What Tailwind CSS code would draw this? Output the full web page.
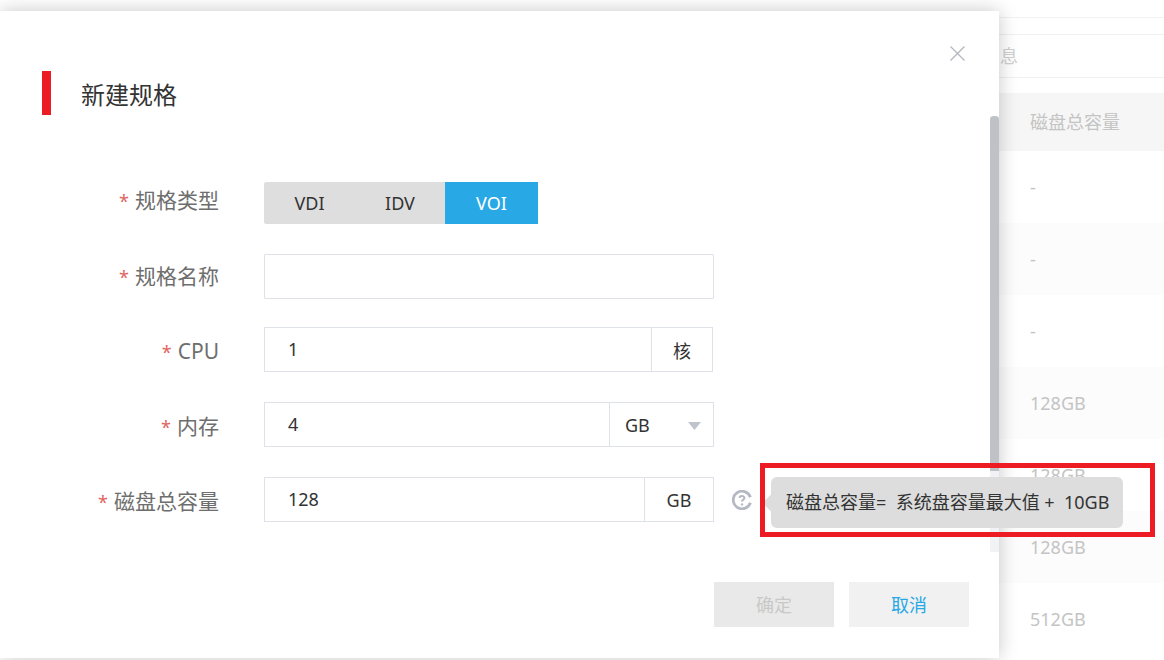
<!DOCTYPE html>
<html lang="zh-CN">
<head>
    <meta charset="UTF-8">
    <title>新建规格</title>
    <script src="https://cdn.jsdelivr.net/npm/@tailwindcss/browser@4"></script>
</head>
<body class="relative w-[1164px] h-[660px] overflow-hidden bg-white font-['Noto_Sans','Noto_Sans_CJK_SC',sans-serif]">
    <!-- page behind the dialog -->
    <div class="flex flex-col w-full h-full pt-[17px] text-[18px] text-[#c4c4c4]">
        <div class="h-[17px] border-t border-[#f2f2f2] shrink-0"></div>
        <div class="h-[44px] border-y border-[#f0f0f0] shrink-0 pl-[1000px] flex items-center text-[#d0d0d0]">息</div>
        <div class="h-[58px] mt-[15px] bg-[#f6f6f6] shrink-0 pl-[1030px] flex items-center">磁盘总容量</div>
        <div class="h-[72px] shrink-0 pl-[1030px] flex items-center">-</div>
        <div class="h-[72px] shrink-0 pl-[1030px] flex items-center bg-[#fcfcfc]">-</div>
        <div class="h-[72px] shrink-0 pl-[1030px] flex items-center">-</div>
        <div class="h-[72px] shrink-0 pl-[1030px] flex items-center bg-[#fcfcfc]">128GB</div>
        <div class="h-[72px] shrink-0 pl-[1030px] flex items-center">128GB</div>
        <div class="h-[72px] shrink-0 pl-[1030px] flex items-center bg-[#fcfcfc]">128GB</div>
        <div class="h-[72px] shrink-0 pl-[1030px] flex items-center">512GB</div>
    </div>

    <!-- dialog -->
    <div class="absolute left-0 top-[11px] w-[999px] h-[647px] bg-white shadow-[0_0_18px_rgba(0,0,0,0.22)]">
        <div class="absolute right-0 top-[105px] w-[9px] h-[436px] bg-[#f0f2f6]">
            <div class="w-full h-[355px] bg-[#bec2c6] rounded-t-[4px]"></div>
        </div>

        <svg class="absolute left-[950px] top-[35px] w-[15px] h-[15px] text-[#b4b8c0]" viewBox="0 0 15 15" fill="none" stroke="currentColor" stroke-width="1.4">
            <path d="M0.5 0.5 14.5 14.5M14.5 0.5 0.5 14.5"></path>
        </svg>

        <div class="flex items-center h-[44px] mt-[60px] pl-[42px]">
            <div class="w-[9px] h-[44px] bg-[#ed1c24]"></div>
            <h1 class="ml-[30px] pt-[4px] text-[24px] leading-none text-[#333]">新建规格</h1>
        </div>

        <div class="flex flex-col gap-[30px] mt-[67px]">
            <div class="flex items-center h-[42px]">
                <label class="w-[219px] pb-[6px] text-right text-[21px] leading-none text-[#6e6e6e]"><span class="text-[#e0655f] text-[18px] mr-[6px]">*</span>规格类型</label>
                <div class="flex ml-[45px] h-[42px] w-[274px] text-[18px] text-[#333] rounded-l-[2px] overflow-hidden">
                    <div class="w-[91px] bg-[#dedede] flex items-center justify-center">VDI</div>
                    <div class="w-[90px] bg-[#dedede] flex items-center justify-center">IDV</div>
                    <div class="w-[93px] bg-[#29a8e6] text-white flex items-center justify-center">VOI</div>
                </div>
            </div>
            <div class="flex items-center h-[45px]">
                <label class="w-[219px] text-right text-[21px] leading-none text-[#6e6e6e]"><span class="text-[#e0655f] text-[18px] mr-[6px]">*</span>规格名称</label>
                <input class="ml-[45px] w-[450px] h-[45px] border border-[#dfe1e8] rounded-[1px] outline-none">
            </div>
            <div class="flex items-center h-[45px] -mt-[2px]">
                <label class="w-[219px] pt-[4px] text-right text-[21px] leading-none text-[#6e6e6e]"><span class="text-[#e0655f] text-[18px] mr-[6px]">*</span>CPU</label>
                <div class="flex ml-[45px] w-[449px] h-[45px] border border-[#dfe1e8] text-[18px] text-[#333]">
                    <div class="flex-1 pl-[23px] flex items-center">1</div>
                    <div class="w-[61px] pt-[3px] border-l border-[#dfe1e8] flex items-center justify-center">核</div>
                </div>
            </div>
            <div class="flex items-center h-[45px]">
                <label class="w-[219px] pt-[4px] text-right text-[21px] leading-none text-[#6e6e6e]"><span class="text-[#e0655f] text-[18px] mr-[6px]">*</span>内存</label>
                <div class="flex ml-[45px] w-[450px] h-[45px] border border-[#dfe1e8] text-[18px] text-[#333]">
                    <div class="flex-1 pl-[23px] flex items-center">4</div>
                    <div class="w-[104px] pt-[2px] border-l border-[#dfe1e8] pl-[15px] pr-[12px] flex items-center justify-between">
                        GB
                        <svg class="w-[13px] h-[8px] text-[#bfc3cc]" viewBox="0 0 13 8" fill="currentColor"><path d="M0 0H13L6.5 8Z"></path></svg>
                    </div>
                </div>
            </div>
            <div class="flex items-center h-[45px]">
                <label class="w-[219px] pt-[4px] text-right text-[21px] leading-none text-[#6e6e6e]"><span class="text-[#e0655f] text-[18px] mr-[6px]">*</span>磁盘总容量</label>
                <div class="flex ml-[45px] w-[450px] h-[45px] border border-[#dfe1e8] text-[18px] text-[#333]">
                    <div class="flex-1 pl-[23px] flex items-center">128</div>
                    <div class="w-[69px] pt-[2px] border-l border-[#dfe1e8] flex items-center justify-center">GB</div>
                </div>
                <svg class="ml-[18px] w-[20px] h-[20px] text-[#b4b9c4]" viewBox="0 0 20 20" fill="none" stroke="currentColor" stroke-width="2.8">
                    <path d="M18.4 7.2A8.8 8.8 0 1 0 18.4 12.8"></path>
                    <path stroke-width="2" d="M7.6 8C7.6 5.2 12.4 5.2 12.4 8C12.4 9.6 10 9.6 10 11.6"></path>
                    <circle cx="10" cy="14.4" r="1.2" fill="currentColor" stroke="none"></circle>
                </svg>
            </div>
        </div>

        <div class="flex gap-[15px] mt-[60px] pl-[714px] text-[18px]">
            <button class="w-[120px] h-[45px] pt-[2px] bg-[#e9e9e9] text-[#c8c8c8]">确定</button>
            <button class="w-[120px] h-[45px] pt-[2px] bg-[#f1f1f1] text-[#29a8e6]">取消</button>
        </div>
    </div>

    <!-- tooltip and annotation box -->
    <div class="absolute left-[771px] top-[477px] w-[352px] h-[51px] bg-[#dddddd] rounded-[6px] flex items-center pl-[15px] text-[18px] text-[#333] whitespace-pre">
        <div class="absolute -left-[6px] top-[20px] w-[12px] h-[12px] rotate-45 bg-[#dddddd]"></div>
        <span class="relative">磁盘总容量=  系统盘容量最大值 +  10GB</span>
    </div>
    <div class="absolute left-[760px] top-[463px] w-[395px] h-[74px] border-[5px] border-[#ed1c24]"></div>
</body>
</html>
